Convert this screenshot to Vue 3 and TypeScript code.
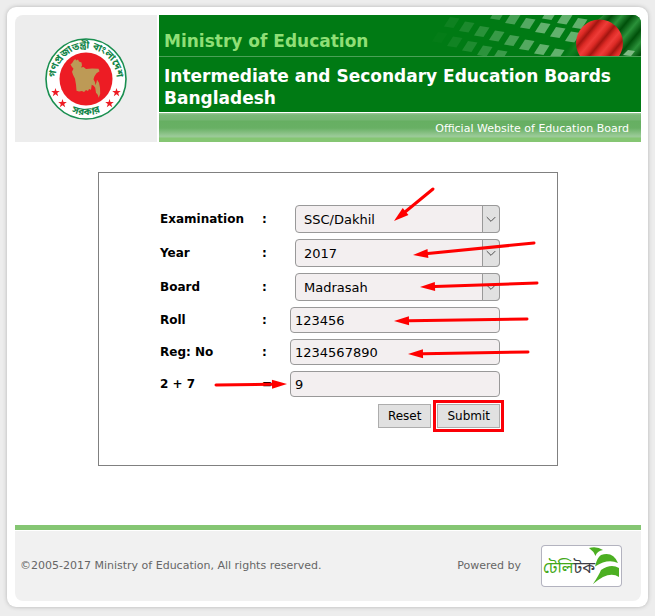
<script setup lang="ts">
import { ref } from 'vue'

const exams = ['SSC/Dakhil', 'JSC/JDC', 'HSC/Alim']
const years = ['2017', '2016', '2015']
const boards = ['Madrasah', 'Dhaka', 'Rajshahi']

const exam = ref('SSC/Dakhil')
const year = ref('2017')
const board = ref('Madrasah')
const roll = ref('123456')
const reg = ref('1234567890')
const answer = ref('9')

function resetForm(): void {
  exam.value = exams[0]
  year.value = years[0]
  board.value = boards[0]
  roll.value = ''
  reg.value = ''
  answer.value = ''
}

// Slanted tiles of the banner, row by row; they grow stronger to the right
interface Tile { x: number; y: number; o: number }
const tiles: Tile[] = []
const rows = [
  { x: 131, y: -1, n: 3 },
  { x: 79, y: -1, n: 6 },
  { x: 33, y: 7, n: 8 },
  { x: 21, y: 22, n: 5 },
]
for (const r of rows) {
  for (let i = 0; i < r.n; i++) {
    const x = r.x + i * 15
    tiles.push({ x, y: r.y + i * 4.5, o: Math.max(0.02, Math.min(0.46, (x - 18) / 230)) })
  }
}

// Each arrow: tail x/y, tip x/y, in the coordinates of the field block
const arrows = [
  [273, -16, 234, 16],
  [374, 38, 253, 50],
  [377, 78, 260, 82],
  [367, 114, 234, 116],
  [368, 147, 248, 149],
  [56, 180, 127, 179],
].map(([x1, y1, x2, y2]) => {
  const len = Math.hypot(x2 - x1, y2 - y1)
  const ux = (x2 - x1) / len
  const uy = (y2 - y1) / len
  const bx = x2 - ux * 15
  const by = y2 - uy * 15
  return {
    x1, y1, bx, by,
    head: `${x2},${y2} ${bx - uy * 4.5},${by + ux * 4.5} ${bx + uy * 4.5},${by - ux * 4.5}`,
  }
})
</script>

<template>
  <div class="card">
    <header class="header">
      <div class="emblem">
        <svg width="82" height="82" viewBox="0 0 82 82" role="img" aria-label="Government seal">
          <defs>
            <path id="arc-top" d="M12 51A30.600 30.600 0 1 1 70 51" />
            <path id="arc-bottom" d="M10.400 60A36 36 0 0 0 71.600 60" />
          </defs>
          <circle cx="41" cy="41" r="40" fill="#fff" stroke="#1a8f50" stroke-width="1.600" />
          <circle cx="41" cy="41" r="26.500" fill="#ed1c24" />
          <path fill="#bd9a56" d="M29 22l1.500-1 .5 1.500 2-1 1 2 2.500 1 .5 3-1 2 2.500-.5 2.500 2 6-.5 6.500.3 1 2.500-3 2-2 3-1 3 1.500 3 .5 3 1-3 .5-2.500 2 3 1 5 .2 6-1.500 4-1-3-1.700-2-.8-5-1.500-2-2-1-.7 5-2-.8-1 2-2-1-2 2-2-1-3 .5-2.500-.7-.5-6-1-6-2-4-1-3 1.500-3-2-2.500-1-2 1.500-1z" />
          <text class="seal-text"><textPath href="#arc-top" startOffset="50%" text-anchor="middle">গণপ্রজাতন্ত্রী বাংলাদেশ</textPath></text>
          <text class="seal-text"><textPath href="#arc-bottom" startOffset="50%" text-anchor="middle">সরকার</textPath></text>
          <g fill="#ed1c24">
            <path id="star" d="M10.500 50l1 3h3.300l-2.600 2 1 3.200-2.700-2-2.700 2 1-3.200-2.600-2h3.300z" />
            <use href="#star" x="7" y="11" />
            <use href="#star" x="61" y="0" />
            <use href="#star" x="54" y="11" />
          </g>
        </svg>
      </div>
      <div class="titles">
        <div class="ministry">
          <svg class="flag" width="222" height="41" viewBox="0 0 222 41" aria-hidden="true">
            <defs>
              <linearGradient id="folds" gradientUnits="userSpaceOnUse" x1="0" y1="0" x2="6" y2="5" spreadMethod="reflect">
                <stop offset="0" stop-color="#2a9139" />
                <stop offset="1" stop-color="#00500a" />
              </linearGradient>
              <linearGradient id="red" gradientUnits="userSpaceOnUse" x1="164" y1="12" x2="170" y2="17" spreadMethod="reflect">
                <stop offset="0" stop-color="#ee3c38" />
                <stop offset=".5" stop-color="#dc2a25" />
                <stop offset="1" stop-color="#a31510" />
              </linearGradient>
              <linearGradient id="fade" x1="0" x2="1" y1="0" y2="0">
                <stop offset="0" stop-color="#fff" stop-opacity="0" />
                <stop offset=".5" stop-color="#fff" />
              </linearGradient>
              <mask id="fade-mask"><path d="M140 41L184 0h38v41z" fill="url(#fade)" /></mask>
            </defs>
            <path v-for="(t, i) in tiles" :key="i" :d="`M${t.x - 2} ${t.y - 5}l9.500 1.500-6 9.500-9.500-1.500z`" fill="#d5f3d8" :fill-opacity="t.o" />
            <path d="M140 41L184 0h38v41z" fill="url(#folds)" mask="url(#fade-mask)" />
            <path d="M209 35l7 1-4 5-8-1z" fill="#7fba84" />
            <circle cx="180.500" cy="28" r="23.500" fill="url(#red)" />
          </svg>
          <p>Ministry of Education</p>
        </div>
        <h1>Intermediate and Secondary Education Boards Bangladesh</h1>
        <p class="official">Official Website of Education Board</p>
      </div>
    </header>

    <main class="main">
      <form class="panel" @submit.prevent @reset.prevent="resetForm">
        <div class="fields">
          <label for="exam">Examination</label><b>:</b>
          <div class="pick">
            <select id="exam" v-model="exam"><option v-for="o in exams" :key="o">{{ o }}</option></select>
            <svg viewBox="0 0 17 26" aria-hidden="true"><path d="M4 11l4.500 4.500 4.500-4.500" /></svg>
          </div>
          <label for="year">Year</label><b>:</b>
          <div class="pick">
            <select id="year" v-model="year"><option v-for="o in years" :key="o">{{ o }}</option></select>
            <svg viewBox="0 0 17 26" aria-hidden="true"><path d="M4 11l4.500 4.500 4.500-4.500" /></svg>
          </div>
          <label for="board">Board</label><b>:</b>
          <div class="pick">
            <select id="board" v-model="board"><option v-for="o in boards" :key="o">{{ o }}</option></select>
            <svg viewBox="0 0 17 26" aria-hidden="true"><path d="M4 11l4.500 4.500 4.500-4.500" /></svg>
          </div>
          <label for="roll">Roll</label><b>:</b>
          <input id="roll" v-model="roll" type="text">
          <label for="reg">Reg: No</label><b>:</b>
          <input id="reg" v-model="reg" type="text">
          <label for="answer">2 + 7</label><b>=</b>
          <input id="answer" v-model="answer" type="text">
          <div class="actions">
            <button type="reset">Reset</button>
            <button type="submit" class="marked">Submit</button>
          </div>
          <svg class="arrows" width="340" height="200" aria-hidden="true">
            <g v-for="(a, i) in arrows" :key="i">
              <line :x1="a.x1" :y1="a.y1" :x2="a.bx" :y2="a.by" />
              <polygon :points="a.head" />
            </g>
          </svg>
        </div>
      </form>
    </main>

    <footer class="footer">
      <p>©2005-2017 Ministry of Education, All rights reserved.</p>
      <div class="powered">
        <span>Powered by</span>
        <a href="#" aria-label="Teletalk">
          <svg width="81" height="42" viewBox="0 0 81 42" aria-hidden="true">
            <text class="brand" x="2" y="28"><tspan fill="#43a817">টেলি</tspan><tspan fill="#3c3c46">টক</tspan></text>
            <g fill="#4caf22">
              <path d="M48 3q8-2 14 2-6 1-7.500 6-2-5-6.500-8z" />
              <path d="M54 21.500q2-9 6-11.500 12-4 17 8-10-5-23 3.500z" />
              <path d="M52 39q6-9 8-14 10-7 18-2v9q-10-7-26 7z" />
            </g>
          </svg>
        </a>
      </div>
    </footer>
  </div>
</template>

<style>
body {
  background: #ededed;
}
</style>

<style scoped>
* {
  box-sizing: border-box;
}
.card {
  margin: 7px;
  padding: 8px 7px 6px 8px;
  background: #fff;
  border-radius: 9px;
  box-shadow: 0 0 4px #b5b5b5;
  font-family: Verdana, "DejaVu Sans", sans-serif;
}
p, h1 {
  margin: 0;
}
.header {
  display: grid;
  grid-template-columns: 142px 1fr;
  gap: 2px;
}
.emblem {
  display: grid;
  place-items: center;
  background: #ededed;
  border-radius: 8px 0 0 0;
}
.seal-text {
  fill: #118548;
  font: bold 10px "Noto Sans Bengali", "Noto Sans", sans-serif;
}
.titles {
  overflow: hidden;
  border-radius: 0 8px 0 0;
}
.ministry {
  position: relative;
  height: 42px;
  padding: 15px 5px 0;
  background: #007a14;
  border-bottom: 1px solid #4aa157;
  color: #8fdf76;
  font-size: 17px;
  font-weight: bold;
  line-height: 22px;
}
.flag {
  position: absolute;
  top: 0;
  right: 0;
}
.ministry p {
  position: relative;
}
h1 {
  padding: 8px 5px 3px;
  background: #007a14;
  color: #fff;
  font-size: 17px;
  line-height: 22px;
}
.official {
  height: 29px;
  margin-top: 1px;
  padding: 6px 12px 0;
  background: linear-gradient(#9bc99b 0, #7ab878 2px, #74b572 7px, #66af62 8px, #68b064 15px, #9aca97 23px, #9aca97 24px, #85c673 25px);
  color: #fff;
  font-size: 11px;
  line-height: 20px;
  text-align: right;
}
.main {
  padding: 30px 16px 59px;
}
.panel {
  max-width: 460px;
  margin: 0 auto;
  padding: 32px 57px 37px 61px;
  border: 1px solid #808080;
}
.fields {
  position: relative;
  display: grid;
  grid-template-columns: 102px 28px 1fr;
  row-gap: 6px;
  align-items: center;
  font-size: 12px;
}
label {
  font-weight: bold;
}
.pick {
  position: relative;
  margin-left: 5px;
}
select, input {
  display: block;
  width: 100%;
  border: 1px solid #999;
  border-radius: 4px;
  background: #f3eff0;
  color: #000;
  font: 13px Verdana, "DejaVu Sans", sans-serif;
}
select {
  height: 28px;
  padding: 0 20px 0 8px;
  appearance: none;
}
input {
  height: 26px;
  padding: 0 4px;
}
.pick svg {
  position: absolute;
  top: 0;
  right: 0;
  width: 18px;
  height: 28px;
  border: 1px solid #999;
  border-radius: 0 4px 4px 0;
  background: #e1e1e1;
  fill: none;
  stroke: #444;
  pointer-events: none;
}
.actions {
  grid-column: 1 / -1;
  display: flex;
  justify-content: flex-end;
  gap: 6px;
  padding-top: 1px;
}
button {
  height: 24px;
  padding: 0 9px;
  border: 1px solid #adadad;
  background: #e1e1e1;
  color: #000;
  font: 12px Verdana, "DejaVu Sans", sans-serif;
}
.marked {
  outline: 3px solid #fb0007;
  outline-offset: 1px;
}
.arrows {
  position: absolute;
  top: 0;
  left: 0;
  overflow: visible;
  pointer-events: none;
}
.arrows line {
  stroke: #f00;
  stroke-width: 3;
  stroke-linecap: round;
}
.arrows polygon {
  fill: #f00;
}
.footer {
  display: flex;
  justify-content: space-between;
  align-items: center;
  height: 76px;
  padding: 0 19px 0 5px;
  border-top: 5px solid #85c673;
  border-radius: 0 0 8px 8px;
  background: #f1f1f1;
  box-shadow: inset 0 1px #fff;
  color: #666;
  font-size: 11px;
}
.powered {
  display: flex;
  align-items: center;
  gap: 20px;
}
.powered a {
  display: block;
  height: 42px;
  border-radius: 4px;
  background: #fff;
  box-shadow: inset 0 0 0 1px #b3b3bf;
}
.brand {
  font: 16px "Noto Sans Bengali", "Noto Sans", sans-serif;
}
</style>
